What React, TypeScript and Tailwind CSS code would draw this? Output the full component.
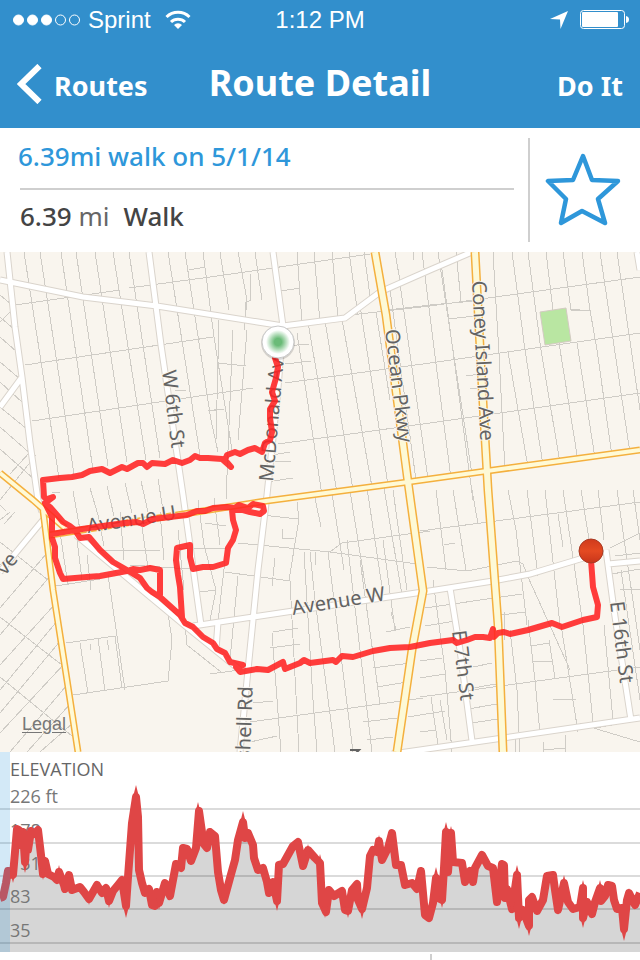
const minorStreets = [
  // north-south, upper grid
  "M24 252L59 478M40 252L74 474M61 252L93 470M76 252L108 466M95 252L127 462M113 252L146 460M129 252L160 458M168 252L200 455M185 252L211 420L218 452",
  "M203 252L214 337L232 450M220 252L229 310M238 252L247 300L244 330M250 274L251 300L245 303L245 320M255 252L262 300M219 320L216 440M233 330L232 352L226 500M247 330L238 440",
  "M297 252L302 323M314 252L320 322M332 252L338 318M349 252L358 315M364 252L370 296M297 333L322 495M308 322L337 493M325 321L353 490M342 319L372 487M360 306L388 485M376 312L390 400",
  "M395 252L400 281M390 290L416 480M400 284L428 479M413 252L414 260M422 252L436 364L451 478M438 252L472 474M456 252L461 301M441 262L473 500",
  "M493 252L495 287L499 354L505 470M508 352L528 467M512 252L525 350L543 465M528 252L541 350L560 463M546 252L553 310M559 343L578 461M563 252L571 310L590 310L597 350L612 456M577 343L595 458M582 252L590 310M600 252L630 453M617 252L640 410M571 310L580 309",
  // north-south, lower grid
  "M73 491L80 530M90 488L98 515M107 486L114 516M125 483L132 513M141 481L148 512M158 479L163 510M60 532L68 585M77 540L82 580M87 555L91 590M108 575L125 690M98 515L104 546M120 512L124 560M141 520L148 568M160 512L164 560M178 530L184 590",
  "M198 500L204 545M214 498L220 545M204 545L216 590L210 620M238 576L230 660M225 560L218 622M275 558L272 586M297 502L299 519L289 580M315 498L321 527M332 494L344 570M350 491L366 590M367 488L384 600M384 488L402 595M393 490L407 590",
  "M272 633L281 752M290 581L299 752M304 552L313 700L317 752M310 552L315 600L335 752M328 552L353 752M347 540L372 752M360 560L380 704M383 540L395 630M391 612L396 630M282 529L282 538L294 539M315 552L315 565",
  "M436 490L446 570M453 490L466 570M472 490L478 524M508 490L516 530L527 625M527 490L538 576M545 490L560 625M563 490L583 625L593 722M558 514L563 547M581 490L590 545M598 490L604 540M617 490L640 650M633 490L640 540M433 580L445 670L452 752M510 630L517 690L520 752M528 620L535 680L540 734M549 640L555 678M561 625L578 732M604 625L613 720M621 570L640 700",
  "M431 697L438 745M440 700L447 740M515 738L515 752M543 742L544 752M565 735L566 752",
  // east-west
  "M15 305L120 290M129 288L210 277L370 254M25 365L213 337M218 363L246 366M32 421L253 388M285 383L430 363L640 333M278 444L430 423L640 393M350 315L430 306L640 277M210 411L224 409",
  "M189 270L205 267M208 411L220 409M281 291L300 288M285 346L309 344M285 364L311 361M272 455L290 452M275 462L291 461M267 482L293 478M449 319L474 316M466 376L480 374M470 389L482 388M175 391L186 390M52 492L60 492M388 310L430 305L474 301",
  "M205 523L226 526M262 515L298 519M420 531L640 502M330 552L342 543L430 531M238 543L330 552L417 564M225 572L290 581M95 550L160 550M178 548L226 548M200 592L216 590M130 565L190 569M427 567L467 571L517 561L523 564L528 577L570 670",
  "M425 608L522 594M425 626L455 621M493 616L525 612M610 548L640 533M615 556L640 553M612 574L640 569M620 590L640 589M504 612L505 640M473 667L492 663M473 688L496 684M420 697L640 667M420 661L442 658M420 678L445 674M531 646L549 643M532 662L553 661M553 699L576 699",
  "M250 722L423 698M253 703L273 701M250 742L277 736M273 632L298 628M270 648L300 644M373 668L410 663M377 687L407 682M363 722L397 718M408 717L445 711M367 740L393 737M386 632L410 627M468 709L497 704M472 723L498 719M420 732L436 730M580 723L600 730L640 742M595 728L640 720M543 750L566 748M444 545L455 543",
  // yards south of the avenue
  "M56 586L100 579M66 643L115 636L122 688M80 643L88 693M98 638L105 691M90 644L91 650M107 640L109 650M73 695L168 681L172 640L168 613M185 625L187 645L221 672M210 674L240 670",
  // diagonals west
  "M0 295L12 305M0 317L15 330M0 337L17 352M0 362L20 379M0 382L23 403M0 407L28 430M0 427L32 455M0 449L35 480M0 322L12 310M10 474L30 452M0 500L36 455M0 505L6 511M0 520L10 512M4 524L15 512",
  "M0 542L48 580M0 617L62 665M0 677L72 736M0 608L47 553M0 635L51 575M0 665L56 603M0 690L58 620M0 713L61 640M0 733L65 663M10 752L67 685M27 752L71 703M40 752L73 723M0 565L20 545",
];

const whiteRoads = [
  "M7 252L15 327L22 377L30 443L38 500L42 512",
  "M149 252L161 345L183 495L201 625",
  "M0 280L83 297L157 306L220 316L283 326L345 318L380 292L430 270L472 252",
  "M273 252L283 326L277 400L267 495L258 570L248 670L240 752",
  "M0 407L22 377",
  "M0 572L43 520",
  "M76 535L183 624L240 670",
  "M193 626L300 610L423 592L493 581L530 574L590 556",
  "M608 564L640 561",
  "M606 550L614 610L631 720",
  "M450 588L460 650L472 741",
  "M392 754L420 750L503 738L640 718",
  "M218 622L216 650",
  "M637 252L640 270",
];

const yellowRoads = [
  "M0 473L33 500L50 515L65 528",
  "M50 535L266 501L408 482L487 471L640 450",
  "M43 510L53 590L67 680L78 752",
];

const parkways = [
  "M375 252L386 315L408 482L423 591L412 650L397 752",
  "M475 252L482 385L488 490L498 624L503 752",
];

const routePaths = [
  "M275 358L278 367L276 378L272 392L275 401L270 409L270 418L272 432L270 440L265 443L262 452L255 448L248 450L240 454L235 452L227 455L225 460L231 467L222 459L208 458L200 458L195 456L190 460L182 463L173 460L165 464L152 463L147 467L143 463L138 463L127 469L122 467L110 473L102 469L90 471L82 475L72 477L60 478L43 480L44 497L47 499L53 497L45 503L50 507L57 515L63 522L70 526L75 530L80 538L89 537L100 550L113 562L127 570L140 578L147 588L152 592L160 597L180 615L185 623L193 627L203 637L213 643L217 649L225 653L230 662L243 665L236 667L240 672L257 669L268 670L283 662L285 669L300 663L304 660L310 663L333 660L336 662L342 656L353 657L373 651L390 648L410 647L430 643L453 640L457 643L467 640L475 637L483 637L490 638L493 629L494 637L498 633L504 632L510 634L528 630L552 623L562 627L583 620L597 617L598 605L593 587L591 560",
  "M45 503L52 517L52 538L55 547L55 558L60 573L63 579L87 577L100 576L127 571L133 569L140 570L150 568L160 570L160 595",
  "M52 534L75 530L110 525L125 523L137 522L143 524L153 519L187 515L197 511L205 511L213 508L227 507L235 508L239 505L248 508L253 504L263 506L264 511L260 514L250 512L243 510L232 510L233 520L236 530L233 540L228 548L226 563L213 567L203 567L193 569L190 557L190 545L177 548L176 560L178 575L180 587L182 617",
];

const roadLabels = [
  { text: "W 6th St", transform: "translate(162 371) rotate(83)", size: 20 },
  { text: "McDonald Av", transform: "translate(273 482) rotate(-85)", size: 20 },
  { text: "Ocean Pkwy", transform: "translate(385 330) rotate(83)", size: 20 },
  { text: "Coney Island Ave", transform: "translate(472 281) rotate(87)", size: 20 },
  { text: "Avenue U", transform: "translate(88 533) rotate(-9)", size: 20 },
  { text: "Avenue W", transform: "translate(293 615) rotate(-9)", size: 20 },
  { text: "E 16th St", transform: "translate(610 602) rotate(83)", size: 20 },
  { text: "E 7th St", transform: "translate(452 631) rotate(83)", size: 20 },
  { text: "shell Rd", transform: "translate(250 760) rotate(-88)", size: 20 },
  { text: "ve", transform: "translate(5 576) rotate(-50)", size: 20 },
];

const elevationLine =
  "0,898 3,897 6,883 8,871 12,872 13,875 17,829 19,830 21,845 23,832 25,862 27,835 28,850 31,831 34,834 38,830 41,855 43,874 45,861 48,874 54,877 57,880 59,872 64,885 65,889 69,875 72,890 80,887 84,892 89,899 97,885 102,893 106,888 109,901 113,891 118,885 122,880 126,906 128,877 132,823 136,797 138,817 139,870 142,883 145,893 149,889 152,905 155,906 157,892 159,903 165,883 170,896 173,880 176,864 181,868 183,848 187,849 191,861 196,848 199,811 202,832 203,843 207,848 210,832 215,836 218,872 221,890 224,900 230,878 235,860 238,840 243,822 245,838 248,833 253,845 254,858 258,870 263,868 267,882 269,893 273,882 277,901 279,865 283,864 288,855 293,846 298,842 303,866 308,850 315,858 320,863 322,903 326,912 329,890 334,896 342,891 345,910 348,911 352,890 357,884 358,900 362,909 367,888 370,856 373,850 377,852 379,841 382,860 388,848 392,833 396,865 401,865 405,885 412,883 417,889 421,871 425,915 429,918 433,903 436,878 438,898 442,900 444,868 446,832 448,872 451,833 453,862 462,863 465,882 470,871 473,882 475,868 482,855 488,866 493,868 497,902 502,864 504,865 505,898 507,889 512,909 517,875 519,918 523,910 529,926 529,900 532,897 537,911 543,900 547,876 553,875 555,890 558,910 564,883 568,902 573,909 580,907 583,888 583,918 587,902 592,914 595,902 600,888 601,901 605,896 608,885 612,886 614,900 617,909 622,908 624,929 627,900 629,893 635,905 640,893";

const peaks = [[59, 865], [136, 785], [198, 802], [243, 811], [308, 844], [320, 854], [379, 835], [436, 867], [446, 822], [451, 826], [517, 865], [564, 875], [583, 880], [600, 880], [629, 888]];
const dips = [[13, 883], [25, 873], [43, 880], [89, 905], [109, 908], [126, 918], [159, 910], [224, 905], [277, 911], [325, 918], [348, 918], [362, 919], [442, 908], [512, 914], [519, 929], [529, 936], [558, 915], [583, 928], [624, 941]];

const elevationTicks = [
  { label: "226 ft", y: 809 },
  { label: "178", y: 843 },
  { label: "131", y: 876 },
  { label: "83", y: 909 },
  { label: "35", y: 943 },
];

function StatusBar() {
  return (
    <div className="relative flex h-10 items-center justify-between pr-[11px] pl-3 font-['Liberation_Sans',sans-serif] text-2xl leading-10">
      <div className="flex items-center">
        <svg className="mr-[7px] h-4 w-[69px]" viewBox="0 0 69 16" fill="white" stroke="white" strokeWidth="1">
          <circle cx="6.500" cy="8" r="5" />
          <circle cx="20.500" cy="8" r="5" />
          <circle cx="34.500" cy="8" r="5" />
          <circle cx="48.500" cy="8" r="5" fill="none" />
          <circle cx="62.500" cy="8" r="5" fill="none" />
        </svg>
        <span>Sprint</span>
        <svg className="ml-[14px] h-5 w-[26px]" viewBox="0 0 26 20" fill="none" stroke="white" strokeWidth="3">
          <path d="M1.500 7a16.500 16.500 0 0 1 23 0M6 12a10 10 0 0 1 14 0" />
          <path d="M13 19l-4-4a5.600 5.600 0 0 1 8 0z" fill="white" stroke="none" />
        </svg>
      </div>
      <span className="absolute inset-x-0 text-center">1:12 PM</span>
      <div className="flex items-center gap-3">
        <svg className="h-[18px] w-[18px]" viewBox="0 0 18 18" fill="white">
          <path d="M18 0L10.500 18L10 8.500L0 8z" />
        </svg>
        <svg className="h-5 w-[49px]" viewBox="0 0 49 20" fill="white">
          <rect x=".500" y=".500" width="44" height="18" rx="3" fill="none" stroke="white" />
          <rect x="2" y="2" width="36" height="15" rx="1" />
          <path d="M46 6q3 .5 3 3.500t-3 3.500z" />
        </svg>
      </div>
    </div>
  );
}

function NavBar() {
  return (
    <nav className="relative flex h-[88px] items-center justify-between px-[17px] font-bold">
      <button className="relative z-10 flex items-center gap-[11px] text-[27px] leading-[88px]">
        <svg className="h-10 w-[26px]" viewBox="0 0 26 40" fill="none" stroke="white" strokeWidth="6">
          <path d="M22.500 2L4 20L22.500 38" />
        </svg>
        <span className="pt-[3px]">Routes</span>
      </button>
      <h1 className="absolute inset-x-0 pb-[3px] text-center text-[36px] leading-[84px]">Route Detail</h1>
      <button className="relative z-10 pt-[3px] text-[27px] leading-[88px]">Do It</button>
    </nav>
  );
}

function RouteSummary() {
  return (
    <section className="flex items-start bg-white py-[10px]">
      <div className="flex-1 pr-[14px] text-[26px]">
        <h2 className="pb-[14px] pl-[18px] leading-9 font-medium text-[#2e97da]">6.39mi walk on 5/1/14</h2>
        <div className="ml-5 border-t-2 border-[#cfcfcf] pt-2 leading-9 font-medium text-[#444]">
          6.39 <span className="font-normal text-[#666]">mi</span>
          <span className="ml-[14px]">Walk</span>
        </div>
      </div>
      <div className="flex h-[104px] w-28 items-center justify-center border-l-2 border-[#cfcfcf] pr-1">
        <button aria-label="Favorite">
          <svg className="h-[76px] w-[76px]" viewBox="545 153 76 76" fill="none" stroke="#2e97da" strokeWidth="4.500" strokeLinejoin="round">
            <path d="M583 157L592 181L618 182L598 200L605 224L582 212L561 224L566 200L548 182L573 181Z" />
          </svg>
        </button>
      </div>
    </section>
  );
}

function RouteMap() {
  return (
    <section className="relative bg-[#f9f5ee]">
      <svg className="block w-full font-['Noto_Sans',sans-serif]" viewBox="0 252 640 500" fill="none">
        <defs>
          <radialGradient id="startDot">
            <stop offset="0.300" stopColor="#6abb78" />
            <stop offset="1" stopColor="#6abb78" stopOpacity="0" />
          </radialGradient>
          <linearGradient id="endPin" x1="0" y1="0" x2="0" y2="1">
            <stop offset="0" stopColor="#d03a1c" />
            <stop offset="0.500" stopColor="#e44a22" />
            <stop offset="1" stopColor="#c8351a" />
          </linearGradient>
        </defs>
        <path d={minorStreets.join("")} stroke="#cfccc6" shapeRendering="crispEdges" />
        <path d="M540 312L566 308L571 341L545 345Z" fill="#b9e6a2" stroke="#d3cbc2" />
        <path d={whiteRoads.join("")} stroke="#dad4cc" strokeWidth="7" />
        <path d={whiteRoads.join("")} stroke="#ffffff" strokeWidth="5" />
        <path d={yellowRoads.join("")} stroke="#f4b03e" strokeWidth="7" />
        <path d={parkways.join("")} stroke="#f4b03e" strokeWidth="9" />
        <path d={yellowRoads.join("")} stroke="#fffad6" strokeWidth="4" />
        <path d={parkways.join("")} stroke="#fdf9d6" strokeWidth="6" />
        <g fill="#636363" stroke="#f9f5ee" strokeWidth="2" strokeLinejoin="round" paintOrder="stroke">
          {roadLabels.map((label) => (
            <text key={label.text} transform={label.transform} fontSize={label.size}>
              {label.text}
            </text>
          ))}
        </g>
        <path d="M350 750h9l-4 4" stroke="#636363" strokeWidth="2" />
        <g stroke="#ff2222" strokeOpacity="0.880" strokeWidth="6" strokeLinecap="round" strokeLinejoin="round">
          <path d={routePaths.join("")} />
        </g>
        <circle cx="278" cy="343" r="17" fill="#000" fillOpacity="0.150" />
        <circle cx="278" cy="342" r="16" fill="#fff" stroke="#c9c9c9" />
        <circle cx="278" cy="342" r="12" fill="url(#startDot)" />
        <circle cx="591" cy="551" r="12" fill="url(#endPin)" stroke="#a83a24" />
      </svg>
      <a href="#legal" className="absolute bottom-4 left-[22px] font-['Liberation_Sans',sans-serif] text-lg leading-6 text-[#777] underline underline-offset-2">
        Legal
      </a>
    </section>
  );
}

function ElevationChart() {
  return (
    <section className="bg-white">
      <svg className="block w-full font-['Open_Sans',sans-serif]" viewBox="0 752 640 208" fill="none">
        <polygon points={`0,952 ${elevationLine} 640,952`} fill="#d6d6d6" />
        {elevationTicks.map((tick) => (
          <path key={tick.label} d={`M0 ${tick.y}H640`} stroke="#000" strokeOpacity="0.140" strokeWidth="2" />
        ))}
        <g fill="#777" fontSize="18">
          <text x="10" y="776" fill="#666">
            ELEVATION
          </text>
          {elevationTicks.map((tick) => (
            <text key={tick.label} x="10" y={tick.y - 6}>
              {tick.label}
            </text>
          ))}
        </g>
        <polyline points={elevationLine} stroke="#df4646" strokeWidth="8" strokeLinejoin="round" />
        <g fill="#df4646">
          {peaks.map(([x, y]) => (
            <path key={x} d={`M${x} ${y}l3 12h-6z`} />
          ))}
          {dips.map(([x, y]) => (
            <path key={x} d={`M${x} ${y}l3 -12h-6z`} />
          ))}
        </g>
        <rect x="0" y="752" width="10" height="200" fill="#2e97da" fillOpacity="0.210" />
        <path d="M431 954V960" stroke="#cfcfcf" strokeWidth="2" />
      </svg>
    </section>
  );
}

export default function App() {
  return (
    <div className="w-full overflow-hidden bg-white font-['Noto_Sans',sans-serif]">
      <header className="bg-[#328fcc] text-white">
        <StatusBar />
        <NavBar />
      </header>
      <RouteSummary />
      <RouteMap />
      <ElevationChart />
    </div>
  );
}
